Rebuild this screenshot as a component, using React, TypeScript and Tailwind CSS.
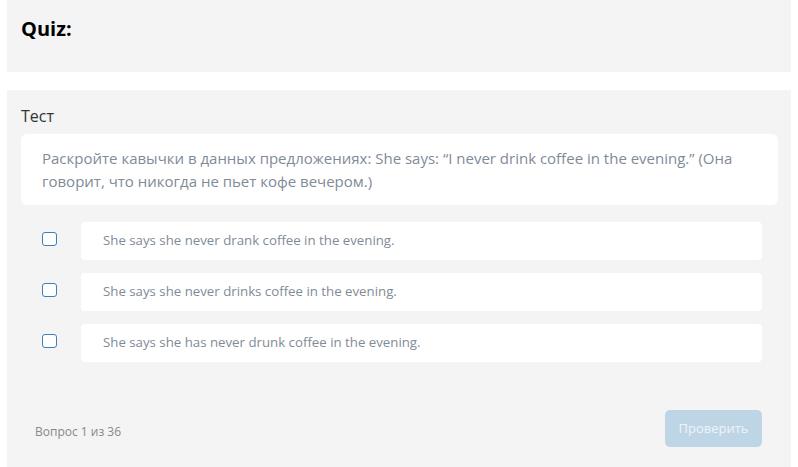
export default function App() {
  const options = [
    'She says she never drank coffee in the evening.',
    'She says she never drinks coffee in the evening.',
    'She says she has never drunk coffee in the evening.',
  ];

  return (
    <div className="min-h-[467px] bg-white px-[7px] font-['Open_Sans',sans-serif]">
      <div className="flex h-[72px] items-center bg-[#f4f4f4] pb-[14px] pl-[14px]">
        <h1 className="text-[20px] font-bold leading-none text-black">Quiz:</h1>
      </div>

      <div className="mt-[18px] min-h-[377px] bg-[#f4f4f4] pl-[14px] pr-[13px] pt-[14px]">
        <div className="text-[16px] leading-[24px] text-[#333]">Тест</div>

        <div className="mt-[6px] rounded-[6px] bg-white px-[21px] pb-[12px] pt-[13px] text-[15px] leading-[23px] text-[#7f8b97]">
          Раскройте кавычки в данных предложениях: She says: “I never drink coffee in the evening.” (Она говорит, что никогда не пьет кофе вечером.)
        </div>

        <div className="mt-[17px] flex flex-col gap-[13px] pl-[21px] pr-[16px]">
          {options.map((o) => (
            <label key={o} className="flex items-start">
              <span className="mt-[10px] h-[14px] w-[15px] shrink-0 rounded-[3px] border-[1.5px] border-[#3d7fb8] bg-white" />
              <span className="ml-[24px] flex h-[38px] flex-1 items-center rounded-[4px] bg-white pl-[22px] text-[13.25px] text-[#7f8b97]">
                {o}
              </span>
            </label>
          ))}
        </div>

        <div className="mt-[48px] flex items-center justify-between pl-[14px] pr-[16px]">
          <span className="mt-[6px] text-[12px] text-[#888]">Вопрос 1 из 36</span>
          <button className="h-[37px] w-[97px] rounded-[5px] bg-[#bed5e5] text-[13px] text-[#eef4f8]">
            Проверить
          </button>
        </div>
      </div>
    </div>
  );
}
